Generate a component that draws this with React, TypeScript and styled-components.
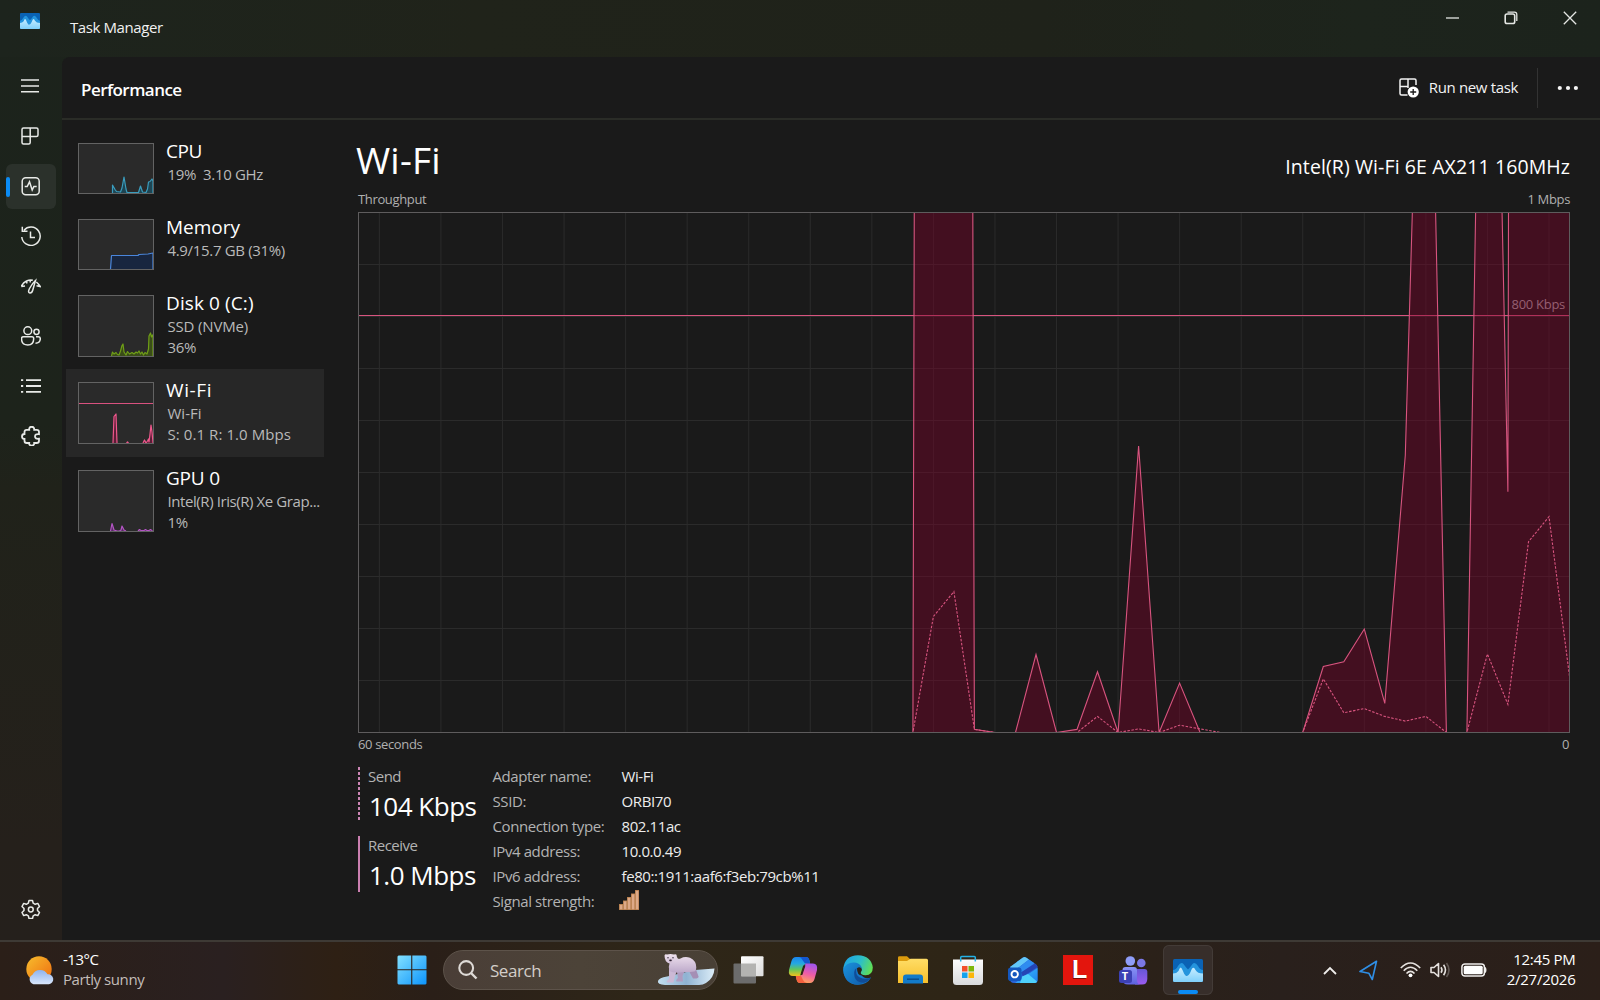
import React from "react";
import styled, { createGlobalStyle } from "styled-components";

const STEP = 20.52;
const PLOT_W = 1211;
const PLOT_H = 520;

// percent of the 1 Mbps scale, keyed by seconds ago
const receive: Record<number, number> = {
  31: 1500,
  30: 1280,
  29: 0.6,
  26: 15,
  24: 0.6,
  23: 11.7,
  21: 55.1,
  19: 9.5,
  12: 12.7,
  11: 13.6,
  10: 19.9,
  9: 5.6,
  8: 53.3,
  7: 190,
  4: 235,
  3: 46.3,
  2: 1900,
  1: 1900,
  0: 1900,
};

const send: Record<number, number> = {
  31: 22.3,
  30: 27.1,
  29: 0.6,
  23: 3.1,
  21: 0.7,
  19: 1.4,
  18: 0.7,
  12: 10.3,
  11: 3.8,
  10: 4.6,
  9: 3.1,
  8: 2.2,
  7: 3.1,
  4: 15.1,
  3: 5.4,
  2: 36.7,
  1: 41.5,
  0: 10.8,
};

const toPoints = (series: Record<number, number>) =>
  Array.from({ length: 60 }, (_, i) => {
    const sec = 59 - i;
    const x = PLOT_W + 0.5 - sec * STEP;
    const y = 0.5 + PLOT_H - ((series[sec] || 0) * PLOT_H) / 100;
    return `${x.toFixed(1)},${y.toFixed(1)}`;
  }).join(" ");

const resources = [
  {
    title: "CPU",
    titleSpacing: -0.4,
    lines: [{ text: "19%\u00a0 3.10 GHz", spacing: -0.35 }],
    height: 76,
    thumb: 51,
    color: "#3a9cbd",
    fill: "#1d4553",
    path: "M34.5 50V42L37 46.500L38.500 48.500L42.500 49L44 45L46 34L48 46L49 49.500H60.500L62.500 43L64.500 49L68 49.500L69.500 46L70.500 39L72 38.500L74 36L75 38V50",
  },
  {
    title: "Memory",
    titleSpacing: 0,
    lines: [{ text: "4.9/15.7 GB (31%)", spacing: -0.33 }],
    height: 76,
    thumb: 51,
    color: "#4a86dc",
    fill: "#18263f",
    path: "M32.500 50L33.500 36.500H60L61 35.500L70 35L75 34V50",
  },
  {
    title: "Disk 0 (C:)",
    titleSpacing: 0.1,
    lines: [
      { text: "SSD (NVMe)", spacing: -0.17 },
      { text: "36%", spacing: -0.35 },
    ],
    height: 87,
    thumb: 62,
    color: "#6f9e17",
    fill: "#3a4c18",
    path: "M33.500 61L34.500 57L36 59L38 57.500L39.500 59.500L41 60L42.500 56L44 50.500L45 49L46 57L48 60L49.500 56.500L51.500 59L54 57.500L56 59L58 57L59.500 58L61 56L62.500 59L64 57L65.500 60L67 57.500L69 59L70.500 54L71 41L72.500 38L73.500 42L74.500 40L75 43V61",
  },
  {
    title: "Wi-Fi",
    titleSpacing: 0.6,
    lines: [
      { text: "Wi-Fi", spacing: 0 },
      { text: "S: 0.1 R: 1.0 Mbps", spacing: 0.08 },
    ],
    height: 88,
    thumb: 62,
    color: "#ee588c",
    fill: "#5c1c36",
    path: "M35 61L36 34.500L38 32L39 61M48.500 61L49.500 60L50.500 61M65 61L66.500 58L68 61L69.500 59L70.500 57L71 60L72 52L73 43L74 50L75 60.500V61",
    limit: 21.5,
    selected: true,
  },
  {
    title: "GPU 0",
    titleSpacing: -0.2,
    lines: [
      { text: "Intel(R) Iris(R) Xe Grap...", spacing: -0.42 },
      { text: "1%", spacing: -0.35 },
    ],
    height: 88,
    thumb: 62,
    color: "#b355c4",
    fill: "#5a2d63",
    path: "M32.500 61L34 53.500L36 60L39 61H41.500L43 60L44 56L46 60L48 61M60 61L61.500 59.500L63 60.500H66L67.500 59.500L69 60.500H71L72.500 59.500L74 60.500V61",
  },
];

const details = [
  ["Adapter name:", "Wi-Fi"],
  ["SSID:", "ORBI70"],
  ["Connection type:", "802.11ac"],
  ["IPv4 address:", "10.0.0.49"],
  ["IPv6 address:", "fe80::1911:aaf6:f3eb:79cb%11"],
];

/* nav icons, 20x20, stroked */

const MenuIcon = () => (
  <NavSvg viewBox="0 0 20 20">
    <path d="M0 4H18M0 10H18M0 15.800H18" />
  </NavSvg>
);

const ProcessesIcon = () => (
  <NavSvg viewBox="0 0 20 20">
    <path d="M2.500 2H15.500Q17 2 17 3.500V9Q17 10.500 15.500 10.500H1V3.500Q1 2 2.500 2ZM9.200 2V16.500Q9.200 18 7.700 18H2.500Q1 18 1 16.500V10.500" />
  </NavSvg>
);

const PerformanceIcon = () => (
  <NavSvg viewBox="0 0 20 20">
    <rect x="1.200" y="1.700" width="17" height="17" rx="3.500" />
    <path d="M3.700 10.500H6.200L8.500 5.800L11.200 14L12.900 10.500H15.700" />
  </NavSvg>
);

const HistoryIcon = () => (
  <NavSvg viewBox="0 0 20 20">
    <path d="M.8 11A9.200 9.200 0 1 0 3 4.200M1.300 .8V5.300H6.500M9.500 5.500V11.500H14" />
  </NavSvg>
);

const StartupIcon = () => (
  <NavSvg viewBox="0 0 20 20">
    <path d="M.3 10.500Q2 6.500 5.500 5L6 7.500M.3 10.500L4 10M5.500 5Q9 3.300 11.800 4.200M9.200 3.800V6.500M15.300 6Q17.500 7.800 19.200 10.500L15.500 9.800" />
    <path d="M14.500 4.500Q11.500 7 8.500 12.500Q6.500 16.500 8.800 17Q11 17.200 11.800 14Q13.200 9 14.500 4.500Z" />
  </NavSvg>
);

const UsersIcon = () => (
  <NavSvg viewBox="0 0 20 20">
    <circle cx="6.800" cy="4.700" r="3.900" />
    <circle cx="15.500" cy="5.800" r="2.600" />
    <path d="M2.500 10.700H11Q12.700 10.700 12.700 12.500Q12.700 19 6.800 19Q.5 19 .5 12.700Q.5 10.700 2.500 10.700ZM15 10.700H17.300Q19.300 10.700 19.300 12.700Q19.300 17 14.500 17.200" />
  </NavSvg>
);

const DetailsIcon = () => (
  <NavSvg viewBox="0 0 20 20">
    <path d="M5 4.200H20M5 10H20M5 15.800H20M0 4.200H2.200M0 10H2.200M0 15.800H2.200" strokeWidth="1.800" />
  </NavSvg>
);

const ServicesIcon = () => (
  <NavSvg viewBox="0 0 20 20">
    <path
      d="M3.500 6Q3.500 3.800 5.700 3.800H8.200Q7.900 .8 10.700 .8Q13.400 .8 13.200 3.800H15.700Q18 3.800 18 6V8.200Q14 7.800 14 10.500Q14 13.200 18 12.700V14.700Q18 17 15.700 17H13.200Q13.400 19.600 10.700 19.600Q7.900 19.600 8.200 17H5.700Q3.500 17 3.500 14.700V13Q1 13 1 10.500Q1 8 3.500 8Z"
      strokeWidth="1.800"
    />
  </NavSvg>
);

const SettingsIcon = () => (
  <NavSvg viewBox="0 0 20 20">
    <path
      d="M8 1.500H11.500L12.200 4.200L14.200 5.300L16.800 4.400L18.500 7.500L16.500 9.500V11.500L18.500 13.500L16.800 16.600L14.200 15.700L12.200 16.800L11.500 19.500H8L7.300 16.800L5.300 15.700L2.700 16.600L1 13.500L3 11.500V9.500L1 7.500L2.700 4.400L5.300 5.300L7.300 4.200Z"
      strokeLinejoin="round"
    />
    <circle cx="9.800" cy="10.500" r="2.400" />
  </NavSvg>
);

const TaskManagerLogo = ({ width, height }: { width: number; height: number }) => (
  <svg width={width} height={height} viewBox="0 0 30 23" preserveAspectRatio="none">
    <defs>
      <linearGradient id="tmFront" x1="0" y1="0" x2="0" y2="1">
        <stop offset="0" stopColor="#c9edff" />
        <stop offset="1" stopColor="#7fd0fb" />
      </linearGradient>
    </defs>
    <rect width="30" height="23" rx="1.500" fill="#0a62b4" />
    <path d="M0 11Q3 11 5 7Q8 2.500 10.500 5Q12.500 8 15 10.500Q17.500 8 19.500 5Q22 2.500 25 7Q27 11 30 11V20H0Z" fill="#2494dd" />
    <path
      d="M0 14.500Q3.500 14.500 5.500 12Q7.500 5.500 9.500 11Q11 15.500 13 17Q15.500 17.500 17.500 13Q20 5.500 22.500 11Q24.500 14.500 30 14.500V21.500Q30 23 28.500 23H1.500Q0 23 0 21.500Z"
      fill="url(#tmFront)"
    />
  </svg>
);

const RunTaskIcon = () => (
  <svg width="20" height="20" viewBox="0 0 20 20" fill="none" stroke="#f2f2f2" strokeWidth="1.500">
    <path d="M8.500 17H2.500Q1 17 1 15.500V2.500Q1 1 2.500 1H15.500Q17 1 17 2.500V7M9 1V8.500H1M9 8.500V10" />
    <circle cx="14.200" cy="14" r="5.600" fill="#fff" stroke="none" />
    <path d="M14.200 11V17M11.200 14H17.200" stroke="#1a1a1a" strokeWidth="1.300" />
  </svg>
);

const SignalIcon = () => (
  <svg width="20" height="20" viewBox="0 0 20 20">
    {[6, 9.5, 13, 16.5, 20].map((h, i) => (
      <g key={h}>
        <rect x={i * 4} y={20 - h} width="4" height={h} fill="#b57c4a" />
        <rect x={i * 4 + 0.8} y={20.8 - h} width="2.600" height={h - 1.5} fill="#dda987" />
      </g>
    ))}
  </svg>
);

const WeatherIcon = () => (
  <svg width="28" height="29" viewBox="0 0 28 29">
    <defs>
      <linearGradient id="sun" x1="0" y1="0" x2="1" y2="1">
        <stop offset="0" stopColor="#f7bd2d" />
        <stop offset="1" stopColor="#ee6c10" />
      </linearGradient>
      <linearGradient id="cloud" x1="0" y1="0" x2="0" y2="1">
        <stop offset="0" stopColor="#8fb4ee" />
        <stop offset="1" stopColor="#d9e6fb" />
      </linearGradient>
    </defs>
    <circle cx="13" cy="13" r="12.700" fill="url(#sun)" />
    <path d="M7.500 28.200A5 5 0 0 1 6.500 18.800A8.500 8.500 0 0 1 21.500 18.300A5 5 0 0 1 23 28.200Z" fill="url(#cloud)" />
  </svg>
);

const WindowsLogo = () => (
  <svg width="30" height="30" viewBox="0 0 30 30">
    <defs>
      <linearGradient id="win" gradientUnits="userSpaceOnUse" x1="0" y1="0" x2="30" y2="30">
        <stop offset="0" stopColor="#85e2ff" />
        <stop offset="1" stopColor="#0a92fb" />
      </linearGradient>
    </defs>
    <path d="M1.500.500H14.200V14.200H.500V1.500ZM15.300.500H28.500L29.500 1.500V14.200H15.300ZM.5 15.300H14.200V29.500H1.500L.5 28.500ZM15.300 15.300H29.500V28.500L28.500 29.500H15.300Z" fill="url(#win)" />
  </svg>
);

const PolarBear = () => (
  <svg width="58" height="34" viewBox="0 0 58 34">
    <defs>
      <linearGradient id="ice" x1="0" y1="0" x2="1" y2="0">
        <stop offset="0" stopColor="#c3dff0" />
        <stop offset="0.500" stopColor="#8fb2d2" />
        <stop offset="1" stopColor="#dcedf8" />
      </linearGradient>
      <linearGradient id="fur" x1="0" y1="0" x2="0" y2="1">
        <stop offset="0" stopColor="#efe2ee" />
        <stop offset="1" stopColor="#bda9ca" />
      </linearGradient>
    </defs>
    <path d="M1 28Q2 24.500 10 23.500L38 17L57.500 15.500Q57 25 49 30Q46 32 42 32H8Q0 31.500 1 28Z" fill="url(#ice)" />
    <path d="M31 15H38.500L41.500 23.500Q41.500 25.500 38 25.500H36L33 20Z" fill="#a58fb5" />
    <path d="M12 14L20 17L17.500 25L16.500 29.500H10Q9 28 12 26Z" fill="#cbb9d5" />
    <path d="M19.500 16H28.500L25.500 23L26 28.500H19.500Q18.500 27 21 25Z" fill="#af9bc0" />
    <path
      d="M7.500 2.500Q8 .8 10 1.500Q13.500 .5 17 1.500Q20 .3 19.800 3.500Q20.500 7 23.500 5.500Q28 3 33 4.800Q39.500 8 39.300 14.500Q39 18.500 37 18.500Q31 19.500 27 19Q17 20.500 12.500 18Q11 14 12.500 10.500Q7.500 9 7.500 2.500Z"
      fill="url(#fur)"
    />
    <path d="M11.500 6.500Q13.500 4.500 15.500 6.500L15 9.500H12.200Z" fill="#d0bcd2" />
    <circle cx="11" cy="4.700" r=".7" fill="#2b2030" />
    <circle cx="16" cy="4.700" r=".7" fill="#2b2030" />
    <ellipse cx="13.500" cy="7.300" rx="1.300" ry=".9" fill="#2b2030" />
  </svg>
);

const TaskViewIcon = () => (
  <svg width="31" height="28" viewBox="0 0 31 28">
    <defs>
      <linearGradient id="tvFront" x1="0" y1="0" x2="1" y2="1">
        <stop offset="0" stopColor="#fff" />
        <stop offset="1" stopColor="#dcdcdc" />
      </linearGradient>
    </defs>
    <rect x=".5" y="7.500" width="22.500" height="20" rx="1" fill="#6c6c6c" />
    <rect x="8" y=".3" width="22.500" height="20" rx="1" fill="url(#tvFront)" />
    <rect x="8" y="7.500" width="15" height="12.800" fill="#b3b3b1" />
  </svg>
);

const CopilotIcon = () => (
  <svg width="30" height="28" viewBox="0 0 30 28">
    <defs>
      <linearGradient id="cpLeft" x1="0" y1="0" x2="0" y2="1">
        <stop offset="0" stopColor="#1a86ef" />
        <stop offset="0.350" stopColor="#25a8e0" />
        <stop offset="0.650" stopColor="#62c65b" />
        <stop offset="1" stopColor="#f2c21b" />
      </linearGradient>
      <linearGradient id="cpRight" x1="0.600" y1="0" x2="0.300" y2="1">
        <stop offset="0" stopColor="#a455ea" />
        <stop offset="0.500" stopColor="#ee5da6" />
        <stop offset="1" stopColor="#ffab52" />
      </linearGradient>
    </defs>
    <path d="M8 1H18Q20.500 1 21.300 4L22.200 7.500H19Q16.500 7.500 15.500 10.500L12.500 20H5Q0 20 1 14L3.500 5Q4.700 1 8 1Z" fill="url(#cpLeft)" />
    <path d="M11 1H18Q20.500 1 21.300 4L22.200 7.500H17L14.500 4Q13 1 11 1Z" fill="#1457cf" />
    <path d="M22 27H12Q9.500 27 8.700 24L7.800 20H11Q13.500 20 14.500 17L17.500 7.500H25Q30 7.500 29 14L26.500 23Q25.300 27 22 27Z" fill="url(#cpRight)" />
    <path d="M19 27H12Q9.500 27 8.700 24L7.800 20H13L15 24Q16.500 27 19 27Z" fill="#f4613f" />
    <path d="M15.200 9.500H17.500L14.300 19H12.300Z" fill="#2d2417" />
  </svg>
);

const EdgeIcon = () => (
  <svg width="30" height="30" viewBox="0 0 30 30">
    <defs>
      <linearGradient id="edgeTop" x1="0" y1="0.300" x2="1" y2="0.600">
        <stop offset="0" stopColor="#1fa3e4" />
        <stop offset="0.550" stopColor="#2dbfc6" />
        <stop offset="1" stopColor="#62e052" />
      </linearGradient>
      <linearGradient id="edgeLow" x1="0" y1="0" x2="1" y2="1">
        <stop offset="0" stopColor="#1b93dd" />
        <stop offset="1" stopColor="#0f5cab" />
      </linearGradient>
    </defs>
    <path d="M.2 15Q2 5 12 5Q20 8 19 14Q17 17 18.500 20Q22 25 28 22.500Q24 29.800 15 29.800Q1.500 29.500 .2 15Z" fill="#1577c9" />
    <path d="M.3 14Q1.500 6 9 7Q18 7.500 19 14.500Q17 11 13.500 12.500Q10 15 11.500 20Q14 27 22 27.500Q15 31.500 8 28Q0 23 .3 14Z" fill="url(#edgeLow)" />
    <path d="M.3 14Q1.500 .3 15 .2Q28.500 1 29.800 12.500Q29.800 20 22.500 20.200Q17 20 17.800 17.200Q19.500 15.500 18.700 12.500Q16.500 7.500 10.500 7.500Q3 7.800 .3 14Z" fill="url(#edgeTop)" />
    <path d="M11.200 17Q10.500 27.500 21 27.800Q25 27 28 22.500Q22 25 17 22.500Q11.700 20 13.500 13Q11.500 14.500 11.200 17Z" fill="#104d98" />
    <path d="M14 13.200Q17 11 18.800 14Q18.800 15.500 17.800 17.200Q17.500 19.500 20.500 20.300Q14 21.500 14 13.200Z" fill="#2c2417" />
  </svg>
);

const FolderIcon = () => (
  <svg width="30" height="28" viewBox="0 0 30 28">
    <defs>
      <linearGradient id="folder" x1="0" y1="0" x2="0" y2="1">
        <stop offset="0" stopColor="#ffdd66" />
        <stop offset="1" stopColor="#f7bf2c" />
      </linearGradient>
    </defs>
    <path d="M0 1.500Q0 .3 1.500 .3H9L12 3H28Q29 3 29 4V12H0Z" fill="#dc9b0d" />
    <path d="M0 5H9L12.500 2.800H28.500Q30 2.800 30 4.300V27H0Z" fill="url(#folder)" />
    <path d="M5 27.500V21.500Q5 18.500 8 18.500H22Q25 18.500 25 21.500V27.500Z" fill="#137bc9" />
    <path d="M9 23.200H21" stroke="#0a4b87" strokeWidth="1.400" />
  </svg>
);

const StoreIcon = () => (
  <svg width="30" height="30" viewBox="0 0 30 30">
    <defs>
      <linearGradient id="bag" x1="0" y1="0" x2="0" y2="1">
        <stop offset="0" stopColor="#fdfdfd" />
        <stop offset="1" stopColor="#d9dadc" />
      </linearGradient>
    </defs>
    <path d="M0 4.500H30V26.500Q30 30 26.500 30H3.500Q0 30 0 26.500Z" fill="url(#bag)" />
    <path d="M7.700 6.500V2.500Q7.700 1.500 8.700 1.500H21.300Q22.300 1.500 22.300 2.500V6.500" fill="none" stroke="#25b2e6" strokeWidth="1.500" />
    <rect x="9" y="11" width="5.500" height="5.500" fill="#f2502b" />
    <rect x="15.500" y="11" width="5.500" height="5.500" fill="#7eb70a" />
    <rect x="9" y="17.500" width="5.500" height="5.500" fill="#13a2ec" />
    <rect x="15.500" y="17.500" width="5.500" height="5.500" fill="#fcb60a" />
  </svg>
);

const OutlookIcon = () => (
  <svg width="30" height="28" viewBox="0 0 30 28">
    <defs>
      <linearGradient id="mail" x1="0" y1="0" x2="1" y2="1">
        <stop offset="0" stopColor="#3fc3fb" />
        <stop offset="1" stopColor="#1c7ff0" />
      </linearGradient>
    </defs>
    <path d="M2 11L15 1.500Q16.500 .3 18 1.500L28 8.500Q29.500 9.500 29.500 11V24Q29.500 27 26.500 27H6Q2 27 2 23Z" fill="#2a63d8" />
    <path d="M2 11L15 1.500Q16.500 .3 18 1.500L21 3.500L6 15Z" fill="#62c7f8" />
    <path d="M10 12L21 3.500L26.500 7.300L13 16.500Z" fill="#2e8cf0" />
    <path d="M13 16.500L27 7.500Q29.500 9 29.500 11L15 20.500Z" fill="#2444b5" />
    <path d="M7 27L29.500 12V24Q29.500 27 26.500 27Z" fill="url(#mail)" />
    <path d="M14 20.500L20 18L29 25.500Q28 27 26.500 27H12Z" fill="#4ed0fb" />
    <rect x="0" y="11.500" width="13.500" height="13.500" rx="2.800" fill="#1457be" />
    <circle cx="6.700" cy="18.200" r="3.200" fill="none" stroke="#fff" strokeWidth="1.900" />
  </svg>
);

const TeamsIcon = () => (
  <svg width="29" height="29" viewBox="0 0 29 29">
    <defs>
      <linearGradient id="teams" x1="0" y1="0" x2="0" y2="1">
        <stop offset="0" stopColor="#8a94f6" />
        <stop offset="1" stopColor="#5d62e0" />
      </linearGradient>
      <linearGradient id="teamsBack" x1="0" y1="0" x2="0" y2="1">
        <stop offset="0" stopColor="#6657d6" />
        <stop offset="1" stopColor="#9a5cf0" />
      </linearGradient>
    </defs>
    <circle cx="22.300" cy="7" r="4.300" fill="#7b78e6" />
    <path d="M18 13H26Q28.300 13 28.300 15.500V23Q28.300 28.500 23 28.500H16Z" fill="url(#teamsBack)" />
    <circle cx="11.300" cy="5" r="4.800" fill="#8f9df8" />
    <path d="M6.500 11H15Q18 11 18 14V24Q18 28.500 22 28.500H9Q3.500 28.500 3.500 23V14Q3.500 11 6.500 11Z" fill="url(#teams)" />
    <rect x="0" y="14" width="13" height="13" rx="2.500" fill="#3c41b4" />
  </svg>
);

const App = () => {
  const receivePoints = toPoints(receive);
  const sendPoints = toPoints(send);

  return (
    <>
      <GlobalStyle />
      <Desktop>
        <Window>
          <TitleBar>
            <TitleIcon>
              <TaskManagerLogo width={20} height={16} />
            </TitleIcon>
            <TitleText>Task Manager</TitleText>
            <WindowControls>
              <svg width="14" height="14" viewBox="0 0 14 14">
                <path d="M0 7H13" />
              </svg>
              <svg width="14" height="14" viewBox="0 0 14 14">
                <rect x="1.200" y="3" width="9.500" height="9.500" rx="1.800" strokeWidth="1.600" />
                <path d="M3.500 1.200H10.500Q12.800 1.200 12.800 3.500V10" />
              </svg>
              <svg width="14" height="14" viewBox="0 0 14 14">
                <path d="M.8 .8L13.200 13.200M13.200 .8L.8 13.200" />
              </svg>
            </WindowControls>
          </TitleBar>

          <Body>
            <Nav>
              <NavButton><MenuIcon /></NavButton>
              <NavButton><ProcessesIcon /></NavButton>
              <NavButton $active><PerformanceIcon /></NavButton>
              <NavButton><HistoryIcon /></NavButton>
              <NavButton><StartupIcon /></NavButton>
              <NavButton><UsersIcon /></NavButton>
              <NavButton><DetailsIcon /></NavButton>
              <NavButton><ServicesIcon /></NavButton>
              <NavSpacer />
              <NavButton><SettingsIcon /></NavButton>
            </Nav>

            <Panel>
              <PanelHeader>
                <PanelTitle>Performance</PanelTitle>
                <RunButton>
                  <RunTaskIcon />
                  <span>Run new task</span>
                </RunButton>
                <HeaderDivider />
                <svg width="22" height="6" viewBox="0 0 22 6" fill="#f5f5f5">
                  <circle cx="2.800" cy="3" r="2.100" />
                  <circle cx="11" cy="3" r="2.100" />
                  <circle cx="18.900" cy="3" r="2.100" />
                </svg>
              </PanelHeader>

              <Content>
                <ResourceList>
                  {resources.map((r) => (
                    <Resource key={r.title} $height={r.height} $selected={r.selected}>
                      <Thumb width="76" height={r.thumb} viewBox={`0 0 76 ${r.thumb}`}>
                        <path d={r.path} fill={r.fill} stroke={r.color} strokeWidth="1.200" strokeLinejoin="round" />
                        {r.limit && <path d={`M1 ${r.limit}H75`} stroke="#d9517f" />}
                        <rect x=".5" y=".5" width="75" height={r.thumb - 1} fill="none" stroke="#636363" />
                      </Thumb>
                      <ResourceText>
                        <ResourceTitle $spacing={r.titleSpacing}>{r.title}</ResourceTitle>
                        {r.lines.map((line) => (
                          <ResourceLine key={line.text} $spacing={line.spacing}>
                            {line.text}
                          </ResourceLine>
                        ))}
                      </ResourceText>
                    </Resource>
                  ))}
                </ResourceList>

                <Main>
                  <Heading>
                    <HeadingTitle>Wi-Fi</HeadingTitle>
                    <AdapterName>Intel(R) Wi-Fi 6E AX211 160MHz</AdapterName>
                  </Heading>
                  <ScaleRow>
                    <span>Throughput</span>
                    <span>1 Mbps</span>
                  </ScaleRow>
                  <ChartBox>
                    <svg width="1212" height="521" viewBox="0 0 1212 521">
                      <defs>
                        <clipPath id="plot">
                          <rect x="0" y="0" width="1212" height="521" />
                        </clipPath>
                      </defs>
                      <g stroke="#2b2b2b">
                        {Array.from({ length: 20 }, (_, i) => {
                          const x = 1191 - i * STEP * 3;
                          return <path key={i} d={`M${x} 0V520`} />;
                        })}
                        {Array.from({ length: 9 }, (_, i) => (
                          <path key={i} d={`M0 ${52.5 + i * 52}H1211`} />
                        ))}
                      </g>
                      <g clipPath="url(#plot)" fill="none" stroke="#d8547f" strokeWidth="1.100">
                        <path d="M0 103.500H1211" />
                        <path d={`M${receivePoints} L1211.500,520.500Z`} fill="rgba(123,0,40,.42)" stroke="none" />
                        <polyline points={receivePoints} />
                        <polyline points={sendPoints} strokeDasharray="2.500 1.500" />
                      </g>
                      <rect x=".5" y=".5" width="1211" height="520" fill="none" stroke="#5e5c5d" />
                    </svg>
                    <LimitLabel>800 Kbps</LimitLabel>
                  </ChartBox>
                  <TimeRow>
                    <span>60 seconds</span>
                    <span>0</span>
                  </TimeRow>

                  <Stats>
                    <Rates>
                      <Rate $dashed>
                        <RateLabel>Send</RateLabel>
                        <RateValue>104 Kbps</RateValue>
                      </Rate>
                      <Rate>
                        <RateLabel>Receive</RateLabel>
                        <RateValue>1.0 Mbps</RateValue>
                      </Rate>
                    </Rates>
                    <DetailGrid>
                      {details.map(([label, value]) => (
                        <React.Fragment key={label}>
                          <DetailLabel>{label}</DetailLabel>
                          <DetailValue>{value}</DetailValue>
                        </React.Fragment>
                      ))}
                      <DetailLabel>Signal strength:</DetailLabel>
                      <SignalCell>
                        <SignalIcon />
                      </SignalCell>
                    </DetailGrid>
                  </Stats>
                </Main>
              </Content>
            </Panel>
          </Body>
        </Window>

        <Taskbar>
          <Weather>
            <WeatherIcon />
            <WeatherText>
              <Temperature>-13°C</Temperature>
              <Condition>Partly sunny</Condition>
            </WeatherText>
          </Weather>

          <Dock>
            <WindowsLogo />
            <SearchBox>
              <svg width="20" height="20" viewBox="0 0 20 20" fill="none" stroke="#dedad6" strokeWidth="2.100">
                <circle cx="8.200" cy="8" r="6.900" />
                <path d="M13 13L18.500 18.500" strokeWidth="2.400" />
              </svg>
              <SearchText>Search</SearchText>
              <PolarBear />
            </SearchBox>
            <DockApps>
              <DockApp><TaskViewIcon /></DockApp>
              <DockApp><CopilotIcon /></DockApp>
              <DockApp><EdgeIcon /></DockApp>
              <DockApp><FolderIcon /></DockApp>
              <DockApp><StoreIcon /></DockApp>
              <DockApp><OutlookIcon /></DockApp>
              <DockApp><LetterBadge>L</LetterBadge></DockApp>
              <DockApp>
                <TeamsIcon />
                <TeamsLetter>T</TeamsLetter>
              </DockApp>
              <DockApp $active><TaskManagerLogo width={30} height={23} /></DockApp>
            </DockApps>
          </Dock>

          <Tray>
            <svg width="14" height="9" viewBox="0 0 14 9">
              <path d="M1 8L7 2L13 8" stroke="#efedeb" strokeWidth="1.800" />
            </svg>
            <svg width="19" height="21" viewBox="0 0 19 21">
              <path d="M17.500 1.200L1 11.500L9.800 13.200L13.300 19.500Z" stroke="#2f8fe6" strokeWidth="1.600" strokeLinejoin="round" />
            </svg>
            <svg width="21" height="16" viewBox="0 0 21 16" stroke="#e6e2df" strokeWidth="1.600">
              <path d="M.8 6Q10.500 -4 20.200 6M3.700 8.800Q10.500 1.800 17.300 8.800M6.500 11.500Q10.500 7.300 14.500 11.500" />
              <circle cx="10.500" cy="13.300" r="1.900" fill="#fff" stroke="none" />
            </svg>
            <svg width="21" height="16" viewBox="0 0 21 16" stroke="#e6e2df" strokeWidth="1.600">
              <path d="M1 5.500H4L8.500 1.500V14.500L4 10.500H1Z" strokeLinejoin="round" />
              <path d="M11 5.200Q13 8 11 10.800M13.600 2.800Q17.300 8 13.600 13.200" />
              <path d="M16.500 1Q21.500 8 16.500 15" stroke="#615854" />
            </svg>
            <svg width="26" height="14" viewBox="0 0 26 14">
              <rect x=".9" y=".9" width="22.500" height="12.200" rx="3" stroke="#efedeb" strokeWidth="1.500" />
              <rect x="2.700" y="2.700" width="19" height="8.600" rx="1.500" fill="#fff" />
              <path d="M24 4.500Q25.500 7 24 9.500" stroke="#efedeb" strokeWidth="1.500" />
            </svg>
            <Clock>
              <ClockLine $spacing={-0.3}>12:45 PM</ClockLine>
              <ClockLine $spacing={-0.25}>2/27/2026</ClockLine>
            </Clock>
          </Tray>
        </Taskbar>
      </Desktop>
    </>
  );
};

export default App;

const GlobalStyle = createGlobalStyle`
  * {
    box-sizing: border-box;
  }

  body {
    margin: 0;
    background: #1a1a1a;
    font-family: "Open Sans", "Noto Sans", sans-serif;
    color: #fff;
  }

  svg {
    display: block;
    flex: none;
  }
`;

const Desktop = styled.div`
  width: 1600px;
  height: 1000px;
  display: flex;
  flex-direction: column;
  overflow: hidden;
`;

const Window = styled.div`
  height: 940px;
  display: flex;
  flex-direction: column;
  background:
    linear-gradient(90deg, #1d241d 0%, #20231a 30%, #1f221a 65%, #1d241c 85%, #1c231c 100%) 0 0 / 100% 57px no-repeat,
    linear-gradient(180deg, #1c231c 0%, #1d231b 45%, #20221a 52%, #25201b 90%, #25201c 100%);
`;

const TitleBar = styled.header`
  height: 57px;
  display: flex;
  align-items: flex-start;
`;

const TitleIcon = styled.div`
  padding: 13px 0 0 20px;
`;

const TitleText = styled.div`
  flex: 1;
  padding: 17px 0 0 30px;
  font-size: 15px;
  line-height: 20px;
  letter-spacing: -0.4px;
  color: #f1f1f1;
`;

const WindowControls = styled.div`
  display: flex;
  gap: 45px;
  padding: 11px 23px 0 0;

  svg {
    fill: none;
    stroke: #e4e6e3;
    stroke-width: 1.3;
  }

  svg:first-child {
    margin-right: -1px;
  }
`;

const Body = styled.div`
  flex: 1;
  min-height: 0;
  display: flex;
`;

const Nav = styled.nav`
  width: 62px;
  display: flex;
  flex-direction: column;
  align-items: flex-start;
  gap: 5px;
  padding: 7px 0 8px 6px;
`;

const NavButton = styled.div<{ $active?: boolean }>`
  position: relative;
  width: 50px;
  height: 45px;
  display: flex;
  align-items: center;
  justify-content: center;
  padding-bottom: 2px;
  border-radius: 6px;
  background: ${({ $active }) => ($active ? "#2b312b" : "transparent")};

  &::before {
    content: "";
    display: ${({ $active }) => ($active ? "block" : "none")};
    position: absolute;
    left: 0;
    top: 13px;
    width: 4px;
    height: 20px;
    border-radius: 2px;
    background: #0b8cf5;
  }
`;

const NavSvg = styled.svg`
  width: 20px;
  height: 20px;
  fill: none;
  stroke: #e8eae7;
  stroke-width: 1.5;
`;

const NavSpacer = styled.div`
  flex: 1;
`;

const Panel = styled.main`
  flex: 1;
  min-width: 0;
  display: flex;
  flex-direction: column;
  background: #1a1a1a;
  border-top-left-radius: 8px;
`;

const PanelHeader = styled.div`
  height: 63px;
  display: flex;
  align-items: center;
  padding: 0 21px 0 19px;
  border-bottom: 2px solid #2a2c27;
`;

const PanelTitle = styled.h1`
  flex: 1;
  margin: 0;
  padding-top: 4px;
  font-size: 17px;
  font-weight: 600;
  letter-spacing: -0.55px;
`;

const RunButton = styled.div`
  display: flex;
  align-items: center;
  gap: 10px;
  font-size: 15px;
  letter-spacing: -0.35px;
  color: #f3f3f3;

  span {
    margin-top: -2px;
  }
`;

const HeaderDivider = styled.div`
  width: 1px;
  height: 40px;
  margin: 0 19px;
  background: #333;
`;

const Content = styled.div`
  flex: 1;
  min-height: 0;
  display: flex;
`;

const ResourceList = styled.aside`
  width: 296px;
  flex: none;
  padding: 10px 34px 0 4px;
`;

const Resource = styled.div<{ $height: number; $selected?: boolean }>`
  height: ${({ $height }) => $height}px;
  display: flex;
  align-items: flex-start;
  gap: 12px;
  padding: 13px 0 0 12px;
  background: ${({ $selected }) => ($selected ? "#272727" : "transparent")};
`;

const Thumb = styled.svg`
  background: #2a2a2a;
`;

const ResourceText = styled.div`
  margin-top: -5px;
  white-space: nowrap;
`;

const ResourceTitle = styled.div<{ $spacing: number }>`
  font-size: 19px;
  line-height: 26px;
  letter-spacing: ${({ $spacing }) => $spacing}px;
`;

const ResourceLine = styled.div<{ $spacing: number }>`
  padding-left: 1.5px;
  font-size: 15px;
  line-height: 21px;
  letter-spacing: ${({ $spacing }) => $spacing}px;
  color: #b9b9b9;
`;

const Main = styled.section`
  width: 1212px;
  display: flex;
  flex-direction: column;
`;

const Heading = styled.div`
  height: 67px;
  display: flex;
  align-items: flex-start;
  justify-content: space-between;
  padding-top: 13px;
`;

const HeadingTitle = styled.h2`
  margin: 0 0 0 -2px;
  font-size: 37px;
  line-height: 54px;
  font-weight: 400;
  letter-spacing: 0.2px;
`;

const AdapterName = styled.div`
  margin-top: 21px;
  font-size: 19.5px;
  line-height: 26px;
  letter-spacing: 0.1px;
`;

const ScaleRow = styled.div`
  height: 25px;
  display: flex;
  justify-content: space-between;
  align-items: center;
  padding-bottom: 1px;
  font-size: 13px;
  letter-spacing: -0.35px;
  color: #b0b0b0;
`;

const ChartBox = styled.div`
  position: relative;
  height: 521px;
`;

const LimitLabel = styled.div`
  position: absolute;
  right: 5px;
  top: 83px;
  font-size: 13px;
  line-height: 18px;
  letter-spacing: -0.28px;
  color: #965f72;
`;

const TimeRow = styled(ScaleRow)`
  height: 23px;
  padding: 0 1px 2px 0;
`;

const Stats = styled.div`
  display: flex;
  padding-top: 11px;
`;

const Rates = styled.div`
  width: 134.5px;
  display: flex;
  flex-direction: column;
  gap: 14px;
`;

const Rate = styled.div<{ $dashed?: boolean }>`
  position: relative;
  height: 55px;
  padding-left: 10px;

  &::before {
    content: "";
    position: absolute;
    left: 0;
    top: 0;
    width: 2px;
    height: ${({ $dashed }) => ($dashed ? 54 : 56)}px;
    background: ${({ $dashed }) =>
      $dashed ? "repeating-linear-gradient(180deg, #cb86b4 0 3px, transparent 3px 5px)" : "#cb7fb0"};
  }
`;

const RateLabel = styled.div`
  margin-top: -1px;
  font-size: 15px;
  line-height: 20px;
  letter-spacing: -0.5px;
  color: #b3b3b3;
`;

const RateValue = styled.div`
  padding-left: 1px;
  font-size: 26px;
  line-height: 40px;
  letter-spacing: -0.5px;
  white-space: nowrap;
`;

const DetailGrid = styled.div`
  display: grid;
  grid-template-columns: 129px auto;
  grid-auto-rows: 25px;
  margin-top: -3px;
  font-size: 15px;
  line-height: 25px;
  letter-spacing: -0.4px;
  white-space: nowrap;
`;

const DetailLabel = styled.div`
  color: #b3b3b3;
`;

const DetailValue = styled.div`
  color: #ededed;
`;

const SignalCell = styled.div`
  margin: 1px 0 0 -2.5px;
`;

const Taskbar = styled.footer`
  height: 60px;
  display: flex;
  align-items: center;
  padding-bottom: 2px;
  border-top: 2px solid #3e3a35;
  background: linear-gradient(90deg, #2b1f18 0%, #2a2020 14%, #2e2014 21%, #2a1f18 27%, #2e2618 40%, #2e2516 60%, #2b2119 72%, #29201c 80%, #2b1f19 100%);
`;

const Weather = styled.div`
  width: 397px;
  display: flex;
  align-items: center;
  gap: 9px;
  padding-left: 26px;
`;

const WeatherText = styled.div`
  margin-top: -2px;
  font-size: 15px;
  line-height: 20.5px;
`;

const Temperature = styled.div`
  letter-spacing: -0.5px;
`;

const Condition = styled.div`
  letter-spacing: -0.42px;
  color: #c3bdb9;
`;

const Dock = styled.div`
  display: flex;
  align-items: center;
`;

const SearchBox = styled.div`
  width: 275px;
  height: 40px;
  display: flex;
  align-items: center;
  margin-left: 16px;
  padding: 0 2px 0 14px;
  border: 1px solid #5d534a;
  border-radius: 20px;
  background: linear-gradient(90deg, #4a3e37, #4c4338 50%, #494036);
`;

const SearchText = styled.div`
  flex: 1;
  padding-left: 12px;
  font-size: 17px;
  letter-spacing: -0.45px;
  color: #d3cec9;
`;

const DockApps = styled.div`
  display: flex;
  gap: 5px;
  margin-left: 5px;
`;

const DockApp = styled.div<{ $active?: boolean }>`
  position: relative;
  width: 50px;
  height: 50px;
  display: flex;
  align-items: center;
  justify-content: center;
  border-radius: 6px;
  background: ${({ $active }) => ($active ? "#372e2a" : "transparent")};
  box-shadow: ${({ $active }) => ($active ? "inset 0 0 0 1px #433b37" : "none")};

  &::after {
    content: "";
    display: ${({ $active }) => ($active ? "block" : "none")};
    position: absolute;
    left: 15px;
    bottom: 1px;
    width: 20px;
    height: 4px;
    border-radius: 2px;
    background: #0b8cf5;
  }
`;

const LetterBadge = styled.div`
  width: 30px;
  height: 30px;
  padding-left: 9px;
  background: #e3150d;
  font-family: "Liberation Sans", sans-serif;
  font-size: 25px;
  font-weight: 700;
  line-height: 29px;
  text-shadow: -1px 1px 0 #7c0d08;
`;

const TeamsLetter = styled.div`
  position: absolute;
  left: 13px;
  top: 23px;
  width: 8px;
  font-size: 11px;
  line-height: 16px;
  font-weight: 700;
  text-align: center;
`;

const Tray = styled.div`
  flex: 1;
  display: flex;
  align-items: center;
  justify-content: flex-end;
  padding-right: 24.5px;

  svg {
    fill: none;
    margin-right: 9px;
  }

  svg:nth-of-type(1),
  svg:nth-of-type(2) {
    margin-right: 22px;
  }

  svg:nth-of-type(4) {
    margin-right: 10px;
  }

  svg:nth-of-type(5) {
    margin-right: 0;
  }
`;

const Clock = styled.div`
  width: 88.5px;
  margin-top: -2px;
  text-align: right;
  font-size: 15px;
  line-height: 20.5px;
`;

const ClockLine = styled.div<{ $spacing: number }>`
  letter-spacing: ${({ $spacing }) => $spacing}px;
`;
